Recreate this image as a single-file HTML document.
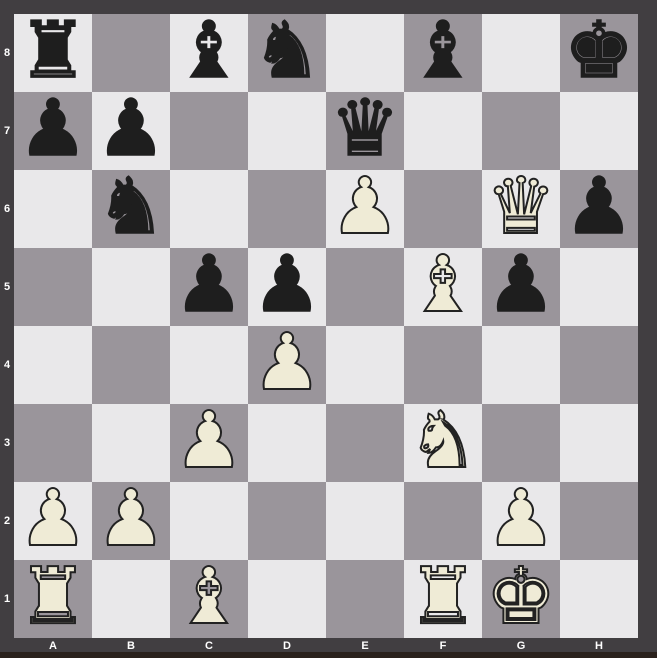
<!DOCTYPE html>
<html><head><style>
html,body{margin:0;padding:0;width:657px;height:658px;overflow:hidden;background:#413e41;}
#b{position:absolute;left:14px;top:14px;width:624px;height:624px;display:grid;grid-template-columns:repeat(8,78px);grid-template-rows:repeat(8,78px);}
.s{position:relative;display:flex;align-items:center;justify-content:center;font-family:"DejaVu Sans",sans-serif;font-size:78px;line-height:1;overflow:hidden;}
.s span{display:block;margin-top:-4px;}
.l{background:#e9e8ea}.d{background:#9a959b}
.k{color:#1e1e1e;-webkit-text-stroke:1.5px #1e1e1e}
.w{color:#efebd6;-webkit-text-stroke:2px #222}
.r{position:absolute;left:4px;width:8px;font:bold 11px "Liberation Sans",sans-serif;color:#fff;}
.f{position:absolute;top:640px;font:bold 11px "Liberation Sans",sans-serif;color:#fff;width:78px;text-align:center;}
#bot{position:absolute;left:0;top:652px;width:657px;height:6px;background:#2a211c;}
</style></head><body>
<div id="b"></div>
<div id="bot"></div>
<script>
var pos={
'a8':'k♜','c8':'k♝','d8':'k♞','f8':'k♝','h8':'k♚',
'a7':'k♟','b7':'k♟','e7':'k♛',
'b6':'k♞','e6':'w♟','g6':'w♛','h6':'k♟',
'c5':'k♟','d5':'k♟','f5':'w♝','g5':'k♟',
'd4':'w♟','c3':'w♟','f3':'w♞',
'a2':'w♟','b2':'w♟','g2':'w♟',
'a1':'w♜','c1':'w♝','f1':'w♜','g1':'w♚'};
var b=document.getElementById('b'),h='';
for(var r=8;r>=1;r--)for(var c=0;c<8;c++){var sq='abcdefgh'[c]+r;var cl=((c+r)%2==0)?'l':'d';var p=pos[sq];
h+='<div class="s '+cl+'">'+(p?'<span class="'+p[0]+'">'+p.slice(1)+'</span>':'')+'</div>';}
b.innerHTML=h;
var o='';
for(var i=0;i<8;i++){o+='<div class="r" style="top:'+(14+i*78+33)+'px">'+(8-i)+'</div>';
o+='<div class="f" style="left:'+(14+i*78)+'px">'+'ABCDEFGH'[i]+'</div>';}
document.body.insertAdjacentHTML('beforeend',o);
</script>
</body></html>
